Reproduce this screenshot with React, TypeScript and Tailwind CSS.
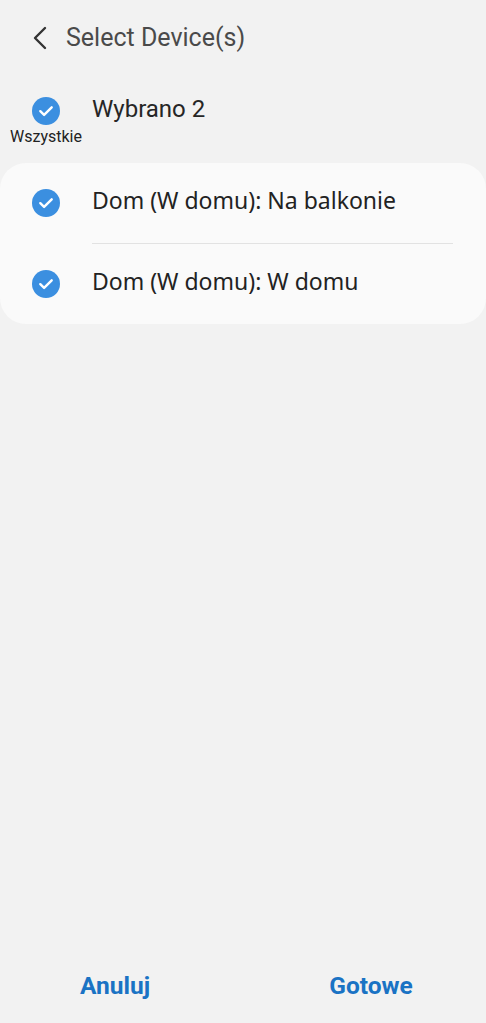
import React from "react";

function CheckCircle() {
  return (
    <svg width="28" height="28" viewBox="0 0 28 28" className="shrink-0">
      <circle cx="14" cy="14" r="14" fill="#3b8fe0" />
      <path
        d="M8.3 14.2l3.8 3.7 7.6-7.6"
        fill="none"
        stroke="#fff"
        strokeWidth="2.4"
        strokeLinecap="round"
        strokeLinejoin="round"
      />
    </svg>
  );
}

const devices = ["Dom (W domu): Na balkonie", "Dom (W domu): W domu"];

export default function App() {
  return (
    <div
      className="flex h-[1023px] w-[486px] flex-col bg-[#f2f2f2] text-[#222]"
      style={{ fontFamily: "Roboto, 'Noto Sans', sans-serif" }}
    >
      <header className="flex h-[76px] items-center pl-[32px]">
        <svg width="16" height="24" viewBox="0 0 16 24" className="mr-[18px]">
          <path d="M13 2L3 12l10 10" fill="none" stroke="#333" strokeWidth="2.4" strokeLinecap="round" strokeLinejoin="round" />
        </svg>
        <h1 className="text-[25px] font-normal text-[#4a4a4a]">Select Device(s)</h1>
      </header>

      <div className="flex h-[87px] items-start pt-[21px]">
        <div className="flex w-[92px] flex-col items-center">
          <CheckCircle />
          <span className="mt-[3px] text-[16px] leading-[18px] text-[#222]">Wszystkie</span>
        </div>
        <span className="mt-[-6px] text-[24px] text-[#262626]">Wybrano 2</span>
      </div>

      <ul className="rounded-[26px] bg-[#fafafa]">
        {devices.map((name, i) => (
          <li key={name}>
            {i > 0 && <div className="ml-[92px] mr-[33px] h-px bg-[#e2e2e2]" />}
            <div className="flex h-[80px] items-center">
              <div className="flex w-[92px] justify-center">
                <CheckCircle />
              </div>
              <span className="pb-[5px] text-[23px] text-[#222]" style={{ fontFamily: "'Noto Sans', sans-serif" }}>
                {name}
              </span>
            </div>
          </li>
        ))}
      </ul>

      <div className="flex-1" />

      <footer className="flex h-[61px] items-start pt-[6px]">
        <button className="w-[230px] text-center text-[24.5px] font-bold text-[#1a73c4]">Anuluj</button>
        <button className="ml-[26px] w-[230px] text-center text-[24.5px] font-bold text-[#1a73c4]">Gotowe</button>
      </footer>
    </div>
  );
}
